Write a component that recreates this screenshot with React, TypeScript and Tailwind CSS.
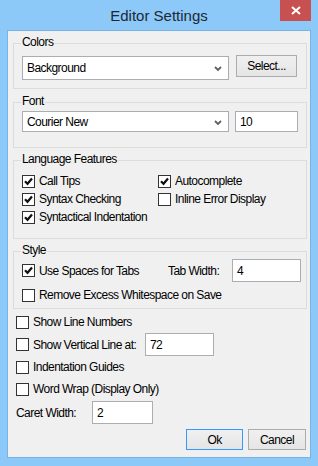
import { ReactNode } from 'react';

const font = { fontFamily: '"Liberation Sans", Arial, sans-serif' };
const txt = 'text-[12px] leading-none tracking-[-0.55px] text-black';

function Check({ checked = false }: { checked?: boolean }) {
  return (
    <span className="flex h-[13px] w-[13px] shrink-0 items-center justify-center border border-[#333333] bg-white">
      {checked && (
        <svg width="9" height="9" viewBox="0 0 9 9">
          <path d="M1 4.3 L3.5 6.8 L8 1.5" fill="none" stroke="#111" strokeWidth="2.2" />
        </svg>
      )}
    </span>
  );
}

function CheckRow({ label, checked, className = '' }: { label: string; checked?: boolean; className?: string }) {
  return (
    <div className={`flex h-[18px] items-center ${className}`}>
      <Check checked={checked} />
      <span className={`ml-[4px] ${txt}`}>{label}</span>
    </div>
  );
}

function Group({ title, className, children }: { title: string; className: string; children: ReactNode }) {
  return (
    <div className={`relative ml-[5px] mr-[3px] border border-[#dcdcdc] ${className}`}>
      <span className={`absolute -top-[8px] left-[7px] bg-[#f0f0f0] px-[1px] ${txt} leading-[14px]`}>{title}</span>
      {children}
    </div>
  );
}

function Combo({ value, className }: { value: string; className: string }) {
  return (
    <div className={`flex items-center justify-between border border-[#abadb3] bg-white pl-[4px] pr-[6px] ${className}`}>
      <span className={txt}>{value}</span>
      <svg width="8" height="6" viewBox="0 0 8 6" className="mt-[2px]">
        <path d="M1 1 L4 4 L7 1" fill="none" stroke="#606060" strokeWidth="1.8" />
      </svg>
    </div>
  );
}

function TextBox({ value, className }: { value: string; className: string }) {
  return (
    <div className={`flex items-center border border-[#abadb3] bg-white pl-[4px] ${className}`}>
      <span className={txt}>{value}</span>
    </div>
  );
}

function Btn({ label, primary, className }: { label: string; primary?: boolean; className: string }) {
  return (
    <div
      className={`flex items-center justify-center border bg-gradient-to-b from-[#f0f0f0] to-[#e5e5e5] ${txt} ${
        primary ? 'border-[#3399ff]' : 'border-[#acacac]'
      } ${className}`}
    >
      {label}
    </div>
  );
}

export default function App() {
  return (
    <div className="flex h-[466px] w-[318px] flex-col bg-[#8cc8f8]" style={font}>
      {/* Title bar */}
      <div className="relative flex h-[30px] shrink-0 items-center justify-center">
        <span className="text-[15px] leading-none text-[#1c2836]">Editor Settings</span>
        <div className="absolute right-[7px] top-0 flex h-[21px] w-[31px] items-center justify-center bg-[#c75050]">
          <svg width="10" height="9" viewBox="0 0 10 9">
            <path d="M1 1 L9 8 M9 1 L1 8" stroke="#fff" strokeWidth="2" />
          </svg>
        </div>
      </div>

      {/* Client area */}
      <div className="mx-[7px] flex h-[428px] flex-col border border-[#79b3e4] bg-[#f0f0f0]">
        <Group title="Colors" className="mt-[12px] h-[46px]">
          <div className="flex items-start pl-[8px] pt-[12px]">
            <Combo value="Background" className="h-[24px] w-[207px]" />
            <Btn label="Select..." className="-mt-[1px] ml-[7px] h-[22px] w-[61px]" />
          </div>
        </Group>

        <Group title="Font" className="mt-[13px] h-[46px]">
          <div className="flex items-start pl-[8px] pt-[8px]">
            <Combo value="Courier New" className="h-[21px] w-[207px]" />
            <TextBox value="10" className="ml-[6px] h-[21px] w-[63px]" />
          </div>
        </Group>

        <Group title="Language Features" className="mt-[12px] h-[79px]">
          <div className="grid grid-cols-[136px_1fr] pl-[8px] pt-[11px]">
            <CheckRow label="Call Tips" checked />
            <CheckRow label="Autocomplete" checked />
            <CheckRow label="Syntax Checking" checked />
            <CheckRow label="Inline Error Display" />
            <CheckRow label="Syntactical Indentation" checked className="col-span-2" />
          </div>
        </Group>

        <Group title="Style" className="mt-[12px] h-[58px]">
          <div className="pl-[8px] pt-[7px]">
            <div className="flex h-[23px] items-center">
              <CheckRow label="Use Spaces for Tabs" checked className="w-[146px]" />
              <span className={txt}>Tab Width:</span>
              <TextBox value="4" className="ml-auto mr-[5px] h-[23px] w-[69px]" />
            </div>
            <CheckRow label="Remove Excess Whitespace on Save" className="mt-[4px]" />
          </div>
        </Group>

        <div className="pl-[8px]">
          <CheckRow label="Show Line Numbers" className="mt-[4px]" />
          <div className="mt-[2px] flex h-[23px] items-center">
            <CheckRow label="Show Vertical Line at:" className="w-[129px]" />
            <TextBox value="72" className="h-[23px] w-[69px]" />
          </div>
          <CheckRow label="Indentation Guides" className="mt-[2px]" />
          <CheckRow label="Word Wrap (Display Only)" className="mt-[4px]" />
          <div className="mt-[3px] flex h-[23px] items-center">
            <span className={`w-[76px] ${txt}`}>Caret Width:</span>
            <TextBox value="2" className="h-[23px] w-[61px]" />
          </div>
        </div>

        <div className="mt-[5px] flex justify-end gap-[5px] pr-[4px]">
          <Btn label="Ok" primary className="h-[21px] w-[57px]" />
          <Btn label="Cancel" className="h-[21px] w-[58px]" />
        </div>
      </div>
    </div>
  );
}
